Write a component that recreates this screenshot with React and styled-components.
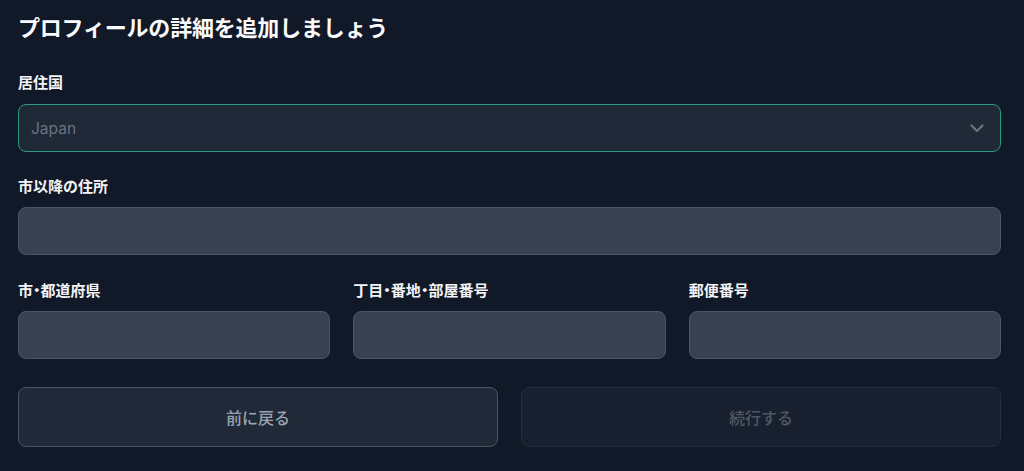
import React from "react";
import styled, { createGlobalStyle } from "styled-components";

const GlobalStyle = createGlobalStyle`
  html, body { margin: 0; padding: 0; background: #111827; }
  body { font-family: "Inter", "Noto Sans CJK JP", sans-serif; color: #f3f4f6; }
  * { box-sizing: border-box; }
`;

const Page = styled.div`
  width: 1024px;
  height: 471px;
  padding: 11px 23px 0 18px;
  background: #111827;
  overflow: hidden;
`;

const Title = styled.h1`
  margin: 0 0 31px;
  font-size: 22px;
  line-height: 30px;
  font-weight: 700;
  color: #f9fafb;
  font-family: "Noto Sans CJK JP", sans-serif;
  letter-spacing: -0.2px;
`;

const Form = styled.div`
  display: flex;
  flex-direction: column;
  gap: 24px;
`;

const Field = styled.div`
  display: flex;
  flex-direction: column;
  gap: ${(p) => p.$gap || 11}px;
  min-width: 0;
`;

const Label = styled.label`
  font-family: "Noto Sans CJK JP", sans-serif;
  font-size: 15px;
  line-height: 20px;
  font-weight: 700;
  color: #f3f4f6;
`;

const Dot = styled.span`
  font-feature-settings: "palt";
`;

const SelectBox = styled.div`
  height: 48px;
  border: 1px solid #2f9784;
  border-radius: 8px;
  background: #1f2937;
  display: flex;
  align-items: center;
  justify-content: space-between;
  padding: 0 16px 0 12px;
`;

const Placeholder = styled.span`
  font-family: "Inter", "Noto Sans CJK JP", sans-serif;
  font-size: 15.5px;
  color: #6b7280;
`;

const Input = styled.div`
  height: 48px;
  border: 1px solid #4b5563;
  border-radius: 8px;
  background: #374151;
`;

const Row = styled.div`
  display: grid;
  grid-template-columns: repeat(3, 1fr);
  column-gap: 23px;
  margin-top: 1px;
`;

const Buttons = styled.div`
  display: grid;
  grid-template-columns: 1fr 1fr;
  column-gap: 23px;
  margin-top: 4px;
`;

const Button = styled.button`
  height: 60px;
  border-radius: 8px;
  border: 1px solid ${(p) => (p.$disabled ? "#232d3c" : "#4b5563")};
  background: ${(p) => (p.$disabled ? "#18202f" : "#1f2937")};
  color: ${(p) => (p.$disabled ? "#4f5765" : "#9ca3af")};
  font-family: "Noto Sans CJK JP", sans-serif;
  font-size: 16px;
  font-weight: 500;
  cursor: ${(p) => (p.$disabled ? "default" : "pointer")};
`;

const Chevron = () => (
  <svg width="14" height="9" viewBox="0 0 14 9" fill="none">
    <path d="M1.5 1.5 7 7l5.5-5.5" stroke="#6b7280" strokeWidth="2.2" strokeLinecap="round" strokeLinejoin="round" />
  </svg>
);

export default function App() {
  return (
    <Page>
      <GlobalStyle />
      <Title>プロフィールの詳細を追加しましょう</Title>
      <Form>
        <Field $gap={12}>
          <Label>居住国</Label>
          <SelectBox>
            <Placeholder>Japan</Placeholder>
            <Chevron />
          </SelectBox>
        </Field>
        <Field>
          <Label>市以降の住所</Label>
          <Input />
        </Field>
        <Row>
          <Field>
            <Label>市<Dot>・</Dot>都道府県</Label>
            <Input />
          </Field>
          <Field>
            <Label>丁目<Dot>・</Dot>番地<Dot>・</Dot>部屋番号</Label>
            <Input />
          </Field>
          <Field>
            <Label>郵便番号</Label>
            <Input />
          </Field>
        </Row>
        <Buttons>
          <Button>前に戻る</Button>
          <Button $disabled disabled>続行する</Button>
        </Buttons>
      </Form>
    </Page>
  );
}
